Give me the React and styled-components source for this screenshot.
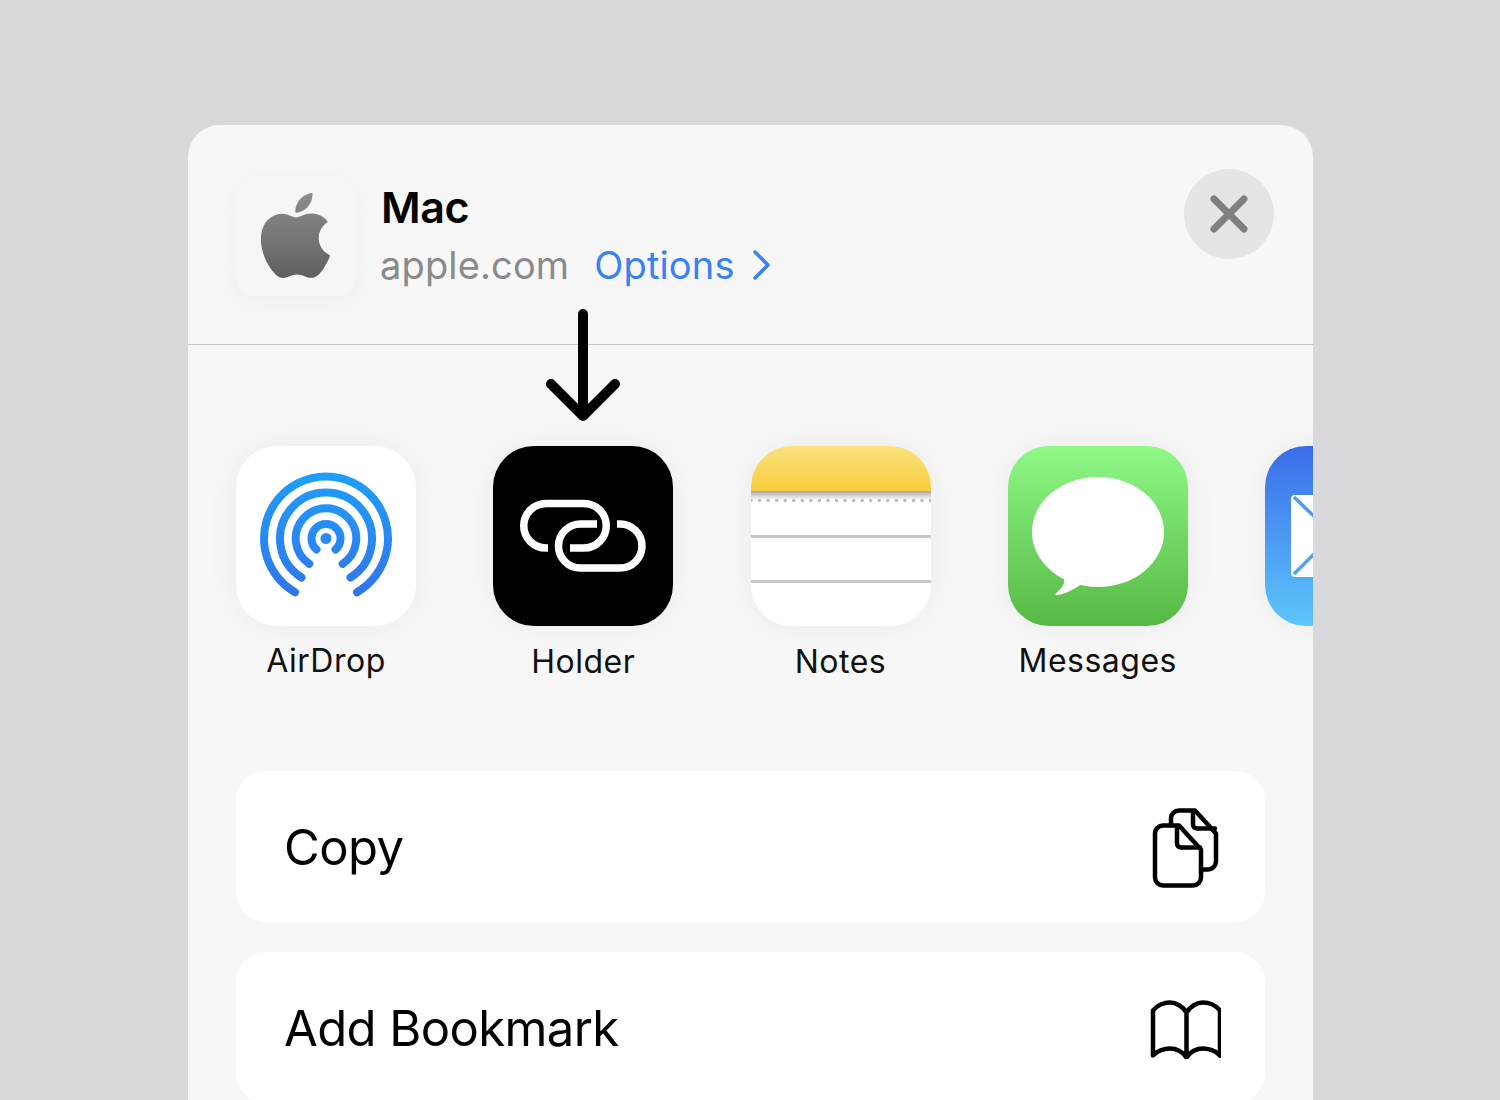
import React from "react";
import styled, { createGlobalStyle } from "styled-components";

const Global = createGlobalStyle`
  html, body { margin: 0; padding: 0; height: 1100px; overflow: hidden; background: #d8d8dd; }
  body { font-family: Inter, "Liberation Sans", sans-serif; -webkit-font-smoothing: antialiased; }
`;

const Page = styled.div`
  height: 1100px;
  padding: 125px 187px 0 188px;
  box-sizing: border-box;
  overflow: hidden;
`;

const Sheet = styled.main`
  position: relative;
  height: 975px;
  background: #f7f7f7;
  border-radius: 32px 32px 0 0;
  overflow: hidden;
`;

const Header = styled.header`
  display: flex;
  align-items: flex-start;
  height: 220px;
  box-sizing: border-box;
  padding: 44px 39px 0 48px;
  border-bottom: 1px solid #c6c6c8;
`;

const SiteTile = styled.div`
  display: flex;
  align-items: center;
  justify-content: center;
  width: 120px;
  height: 120px;
  margin-top: 7px;
  border-radius: 20px;
  background: #f6f6f6;
  box-shadow: 0 6px 30px rgba(0, 0, 0, 0.04);
  flex: none;
`;

const SiteText = styled.div`
  display: flex;
  flex-direction: column;
  margin-left: 25px;
  flex: 1;
`;

const SiteName = styled.div`
  font-size: 43px;
  font-weight: 600;
  line-height: 52px;
  margin-top: 12px;
  color: #000;
  letter-spacing: -0.4px;
`;

const SiteMeta = styled.div`
  display: flex;
  align-items: center;
  margin-top: 6px;
  margin-left: -1px;
  font-size: 38px;
  letter-spacing: 0.15px;
  line-height: 52px;
  font-weight: 400;
`;

const Domain = styled.span`
  color: #8a8a8e;
`;

const Options = styled.span`
  display: inline-flex;
  align-items: center;
  margin-left: 25px;
  color: #3a80f6;
`;

const Chevron = styled.svg`
  width: 20px;
  height: 32px;
  margin-left: 17px;
  fill: none;
  stroke: #3a80f6;
  stroke-width: 3.5;
  stroke-linecap: round;
  stroke-linejoin: round;
`;

const CloseButton = styled.button`
  display: flex;
  align-items: center;
  justify-content: center;
  width: 90px;
  height: 90px;
  padding: 0;
  border: 0;
  border-radius: 50%;
  background: #e5e5e7;
  flex: none;
`;

const CloseGlyph = styled.svg`
  width: 40px;
  height: 40px;
  stroke: #7f7f83;
  stroke-width: 7;
  stroke-linecap: round;
`;

const PointerArrow = styled.svg`
  position: absolute;
  left: 355px;
  top: 183px;
  width: 80px;
  height: 116px;
  fill: none;
  stroke: #000;
  stroke-width: 10;
  stroke-linecap: round;
  stroke-linejoin: round;
`;

const AppRow = styled.section`
  display: flex;
  gap: 77.25px;
  padding: 101px 0 0 48px;
  height: 426px;
  box-sizing: border-box;
`;

const AppCell = styled.div`
  display: flex;
  flex-direction: column;
  align-items: center;
  width: 180px;
  flex: none;
`;

const AppIcon = styled.div`
  width: 180px;
  height: 180px;
  border-radius: 41px;
  overflow: hidden;
  background: ${(p) => p.$bg};
  box-shadow: 0 0 34px rgba(0, 0, 0, 0.05);
  flex: none;
  svg { display: block; width: 180px; height: 180px; }
`;

const AppLabel = styled.div`
  margin-top: ${(p) => p.$top}px;
  font-size: 32px;
  line-height: 40px;
  letter-spacing: 0.5px;
  color: #111;
  white-space: nowrap;
`;

const Actions = styled.section`
  display: flex;
  flex-direction: column;
  gap: 30px;
  padding: 0 48px;
`;

const ActionRow = styled.div`
  display: flex;
  align-items: center;
  justify-content: space-between;
  height: 151px;
  padding: 0 44px 0 48px;
  background: #fff;
  border-radius: 30px;
  flex: none;
`;

const ActionLabel = styled.span`
  padding-top: 2px;
  font-size: 49px;
  font-weight: 400;
  letter-spacing: -0.6px;
  color: #000;
`;

const ActionIcon = styled.svg`
  width: ${(p) => p.$w}px;
  height: ${(p) => p.$h}px;
  fill: none;
  stroke: #000;
  stroke-width: 4.5;
  stroke-linecap: round;
  stroke-linejoin: round;
  flex: none;
`;

const AppleMark = styled.svg`
  width: 85px;
  height: 85px;
  margin: -2px 2px 0 0;
`;

const APPLE =
  "M12.152 6.896c-.948 0-2.415-1.078-3.96-1.04-2.04.027-3.91 1.183-4.961 3.014-2.117 3.675-.546 9.103 1.519 12.09 1.013 1.454 2.208 3.09 3.792 3.039 1.52-.065 2.09-.987 3.935-.987 1.831 0 2.35.987 3.96.948 1.637-.026 2.676-1.48 3.676-2.948 1.156-1.688 1.636-3.325 1.662-3.415-.039-.013-3.182-1.221-3.22-4.857-.026-3.04 2.48-4.494 2.597-4.559-1.429-2.09-3.623-2.324-4.39-2.376-2-.156-3.675 1.09-4.61 1.09zM15.53 3.83c.843-1.012 1.4-2.427 1.245-3.83-1.207.052-2.662.805-3.532 1.818-.78.896-1.454 2.338-1.273 3.714 1.338.104 2.715-.688 3.559-1.701";

function AppleLogo() {
  return (
    <AppleMark viewBox="0 0 24 24">
      <defs>
        <linearGradient id="appleFill" x1="0" y1="0" x2="0" y2="1">
          <stop offset="0" stopColor="#8e8e90" />
          <stop offset="1" stopColor="#5f5f61" />
        </linearGradient>
      </defs>
      <path d={APPLE} fill="url(#appleFill)" />
    </AppleMark>
  );
}

const ARCS = [
  [14.5, -9.5, 11],
  [30.3, -16.7, 25.3],
  [46, -24.5, 39],
  [62, -31, 53.7],
];

function AirDropGlyph() {
  return (
    <svg viewBox="0 0 180 180">
      <defs>
        <linearGradient id="airFill" gradientUnits="userSpaceOnUse" x1="0" y1="26" x2="0" y2="150">
          <stop offset="0" stopColor="#1e9ffb" />
          <stop offset="1" stopColor="#3175ea" />
        </linearGradient>
      </defs>
      <circle cx="90" cy="92.5" r="5.5" fill="url(#airFill)" />
      {ARCS.map(([r, dx, dy]) => (
        <path
          key={r}
          d={`M${90 + dx} ${92.5 + dy}A${r} ${r} 0 1 1 ${90 - dx} ${92.5 + dy}`}
          fill="none"
          stroke="url(#airFill)"
          strokeWidth="8"
          strokeLinecap="round"
        />
      ))}
    </svg>
  );
}

function HolderGlyph() {
  return (
    <svg viewBox="493 446 180 180" fill="none" stroke="#fff" strokeWidth="7.5">
      <path d="M548 548H546A22.25 22.25 0 0 1 546 503.5H584A22.25 22.25 0 0 1 584 548H570" />
      <path d="M597 524H580.5A22 22 0 0 0 580.5 568H620A22 22 0 0 0 620 524H617" />
    </svg>
  );
}

function NotesGlyph() {
  return (
    <svg viewBox="0 0 180 180">
      <defs>
        <linearGradient id="noteTop" x1="0" y1="0" x2="0" y2="1">
          <stop offset="0" stopColor="#fae27d" />
          <stop offset="1" stopColor="#f8cc3c" />
        </linearGradient>
        <linearGradient id="noteEdge" x1="0" y1="0" x2="0" y2="1">
          <stop offset="0" stopColor="#a5a5a5" />
          <stop offset="1" stopColor="#fff" />
        </linearGradient>
      </defs>
      <rect width="180" height="180" fill="#fff" />
      <rect width="180" height="45" fill="url(#noteTop)" />
      <rect y="45" width="180" height="9" fill="url(#noteEdge)" />
      <line x1="0" x2="180" y1="54.5" y2="54.5" stroke="#bcbcc0" strokeWidth="3.6" strokeLinecap="round" strokeDasharray="0 8.55" />
      <rect y="89" width="180" height="3" fill="#c8c8cc" />
      <rect y="134" width="180" height="3" fill="#c8c8cc" />
    </svg>
  );
}

function MessagesGlyph() {
  return (
    <svg viewBox="0 0 180 180" fill="#fff">
      <ellipse cx="90" cy="86" rx="66" ry="55" />
      <path d="M52 128C60 134 56 140 47.5 148C47 149 48 149.5 49 149C58 148 66 143 74 138Z" />
    </svg>
  );
}

function MailGlyph() {
  return (
    <svg viewBox="0 0 180 180">
      <rect x="26" y="49" width="110" height="82" rx="4" fill="#fff" />
      <path d="M29 51L60 81" stroke="#4d9cf0" strokeWidth="3.5" fill="none" />
      <path d="M29 128L60 97" stroke="#4fa4f2" strokeWidth="3.5" fill="none" />
    </svg>
  );
}

const apps = [
  { label: "AirDrop", bg: "#fff", top: 15, glyph: <AirDropGlyph /> },
  { label: "Holder", bg: "#000", top: 16, glyph: <HolderGlyph /> },
  { label: "Notes", bg: "#fff", top: 16, glyph: <NotesGlyph /> },
  { label: "Messages", bg: "linear-gradient(#8ff886, #56b944)", top: 15, glyph: <MessagesGlyph /> },
  { label: "", bg: "linear-gradient(#3a6cea, #5ec6fb)", top: 15, glyph: <MailGlyph /> },
];

export default function App() {
  return (
    <Page>
      <Global />
      <Sheet>
        <Header>
          <SiteTile>
            <AppleLogo />
          </SiteTile>
          <SiteText>
            <SiteName>Mac</SiteName>
            <SiteMeta>
              <Domain>apple.com</Domain>
              <Options>
                Options
                <Chevron viewBox="0 0 20 32">
                  <path d="M3 3L16 16L3 29" />
                </Chevron>
              </Options>
            </SiteMeta>
          </SiteText>
          <CloseButton aria-label="Close">
            <CloseGlyph viewBox="0 0 40 40">
              <path d="M5 5L35 35M35 5L5 35" />
            </CloseGlyph>
          </CloseButton>
        </Header>

        <PointerArrow viewBox="0 0 80 116">
          <path d="M40 6V108M8 76L40 108L72 76" />
        </PointerArrow>

        <AppRow>
          {apps.map((a, i) => (
            <AppCell key={i}>
              <AppIcon $bg={a.bg}>{a.glyph}</AppIcon>
              <AppLabel $top={a.top}>{a.label}</AppLabel>
            </AppCell>
          ))}
        </AppRow>

        <Actions>
          <ActionRow>
            <ActionLabel>Copy</ActionLabel>
            <ActionIcon $w={70} $h={84} viewBox="0 -1.5 70 84">
              <path d="M20 19V12a8 8 0 0 1 8-8H44L65 27V55a8 8 0 0 1-8 8H50" />
              <path d="M42 5V18a4 4 0 0 0 4 4H64" />
              <path d="M12 19H28L50 43V71a8 8 0 0 1-8 8H12a8 8 0 0 1-8-8V27a8 8 0 0 1 8-8Z" />
              <path d="M26 20V37a4 4 0 0 0 4 4H49" />
            </ActionIcon>
          </ActionRow>
          <ActionRow>
            <ActionLabel>Add Bookmark</ActionLabel>
            <ActionIcon $w={76} $h={62} viewBox="0 -1.5 76 62">
              <path d="M41.5 14C38 8 31 4 25 4C19 4 12 7 8 12V57C13 52 19 50 25 50C31 50 38 53 41.5 59C45 53 52 50 58 50C63 50 71 52 75 57V12C71 7 64 4 58 4C52 4 45 8 41.5 14V59" />
            </ActionIcon>
          </ActionRow>
        </Actions>
      </Sheet>
    </Page>
  );
}
